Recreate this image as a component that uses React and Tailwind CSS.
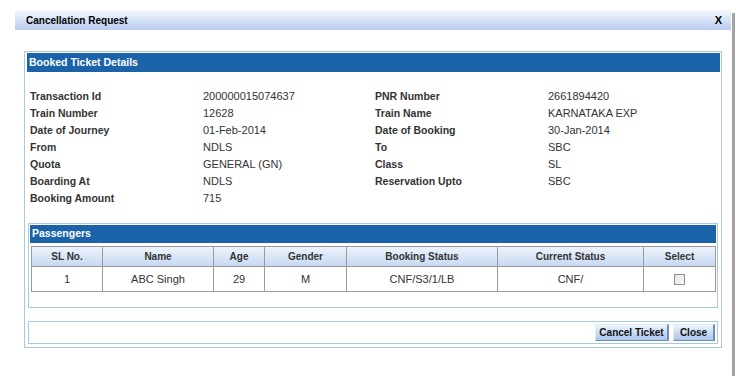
import React from 'react'

const font = { fontFamily: '"Liberation Sans", Arial, sans-serif' }

const left = [
  ['Transaction Id', '200000015074637'],
  ['Train Number', '12628'],
  ['Date of Journey', '01-Feb-2014'],
  ['From', 'NDLS'],
  ['Quota', 'GENERAL (GN)'],
  ['Boarding At', 'NDLS'],
  ['Booking Amount', '715'],
]

const right = [
  ['PNR Number', '2661894420'],
  ['Train Name', 'KARNATAKA EXP'],
  ['Date of Booking', '30-Jan-2014'],
  ['To', 'SBC'],
  ['Class', 'SL'],
  ['Reservation Upto', 'SBC'],
]

const cols = [
  ['SL No.', 'w-[71px]', '1'],
  ['Name', 'w-[111px]', 'ABC Singh'],
  ['Age', 'w-[51px]', '29'],
  ['Gender', 'w-[82px]', 'M'],
  ['Booking Status', 'w-[151px]', 'CNF/S3/1/LB'],
  ['Current Status', 'w-[146px]', 'CNF/'],
  ['Select', 'w-[72px]', null],
]

const App = () => {
  return (
    <div className="w-[736px] h-[376px] bg-white flex pt-[10px] overflow-hidden text-[#333]" style={font}>
      <div className="ml-[15px] w-[716px] flex flex-col">
        {/* title bar */}
        <div className="h-[20px] flex items-center justify-between pl-[11px] pr-[9px] bg-gradient-to-b from-[#f4f7fd] to-[#b9cdef]">
          <span className="text-[10px] font-bold text-black">Cancellation Request</span>
          <span className="text-[11px] font-bold text-black">X</span>
        </div>

        <div className="pt-[21px] pl-[9px]">
          <div className="w-[698px] border border-[#a9c9dc] pt-[1px] pl-[2px] pr-[1px] pb-[3px]">
            <div className="h-[19px] bg-[#1b63a9] text-white text-[10.5px] font-bold flex items-center pl-[2px]">
              Booked Ticket Details
            </div>

            {/* details */}
            <div className="flex pt-[16px] pl-[3px]">
              <div className="flex flex-col">
                {left.map(([k, v]) => (
                  <div key={k} className="h-[17px] flex items-center">
                    <span className="w-[173px] text-[10.5px] font-bold">{k}</span>
                    <span className="w-[172px] text-[11px]">{v}</span>
                  </div>
                ))}
              </div>
              <div className="flex flex-col">
                {right.map(([k, v]) => (
                  <div key={k} className="h-[17px] flex items-center">
                    <span className="w-[173px] text-[10.5px] font-bold">{k}</span>
                    <span className="text-[11px]">{v}</span>
                  </div>
                ))}
              </div>
            </div>

            {/* passengers */}
            <div className="mt-[16px] ml-[1px] w-[690px] border border-[#a9c9dc] p-[1px] pb-[15px]">
              <div className="h-[18px] bg-[#1b63a9] text-white text-[10.5px] font-bold flex items-center pl-[2px]">
                Passengers
              </div>
              <table className="mt-[3px] ml-[1px] border-collapse text-[11px]">
                <thead>
                  <tr className="h-[20px] bg-gradient-to-b from-[#eef4fc] to-[#c4d7f1]">
                    {cols.map(([h, w]) => (
                      <th key={h} className={`${w} border border-[#9a9a9a] text-[10px] font-bold text-center p-0`}>{h}</th>
                    ))}
                  </tr>
                </thead>
                <tbody>
                  <tr className="h-[25px]">
                    {cols.map(([h, w, v]) => (
                      <td key={h} className="border border-[#9a9a9a] text-center p-0">
                        {v !== null ? v : (
                          <span className="inline-block align-middle w-[11px] h-[11px] border border-[#8f8f8f] bg-gradient-to-br from-[#e4e4e4] to-[#fafafa]" />
                        )}
                      </td>
                    ))}
                  </tr>
                </tbody>
              </table>
            </div>

            {/* footer */}
            <div className="mt-[13px] ml-[1px] w-[690px] h-[23px] border border-[#a9c9dc] flex items-center justify-end gap-[4px] pr-[2px]">
              <button className="h-[17px] w-[74px] text-[10px] font-bold text-[#111] bg-gradient-to-b from-[#eef4fc] to-[#a9c4ec] border-r-2 border-b border-[#6f8fb8] border-t border-l border-t-[#e3ecf8] border-l-[#e3ecf8]">
                Cancel Ticket
              </button>
              <button className="h-[17px] w-[42px] text-[10px] font-bold text-[#111] bg-gradient-to-b from-[#eef4fc] to-[#a9c4ec] border-r-2 border-b border-[#6f8fb8] border-t border-l border-t-[#e3ecf8] border-l-[#e3ecf8]">
                Close
              </button>
            </div>
          </div>
        </div>
      </div>
      <div className="ml-[1px] mt-[3px] w-[3px] h-full bg-[#a3a3a3]" />
    </div>
  )
}

export default App
